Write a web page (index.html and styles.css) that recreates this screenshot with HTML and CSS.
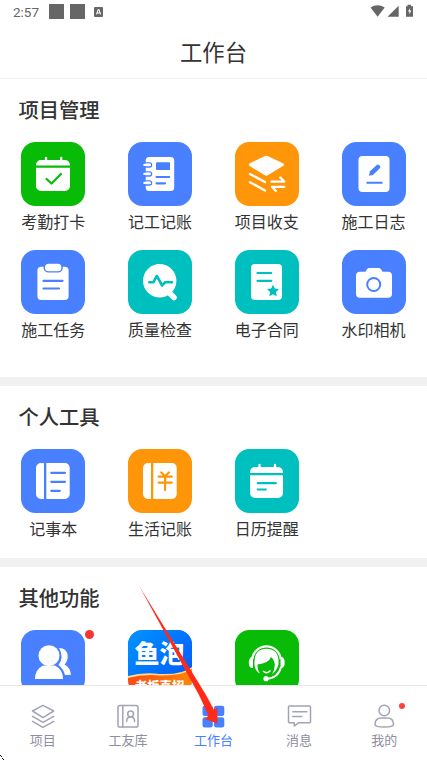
FILE: index.html
```html
<!DOCTYPE html>
<html lang="zh-CN">
<head>
<meta charset="utf-8">
<title>工作台</title>
<link rel="stylesheet" href="styles.css">
</head>
<body>
<div class="screen">
  <div class="status">
    <span class="time">2:57</span>
    <i class="block"></i><i class="block"></i>
    <svg class="abox" viewBox="0 0 9 10"><rect width="9" height="10" rx="1"/><path d="M2.5 7.4 4.1 2.8h.9l1.6 4.6M3.2 6h2.6" fill="none" stroke="#fff" stroke-width="1.1"/></svg>
    <svg class="sys" viewBox="0 0 44 14"><path d="M.5 3.500Q7.500-1 14.700 3.500L7.600 12.700Z"/><path d="M17.500 12.700 28.700 1.700V12.700Z"/><path d="M36 2.200h1.500V.800h3.500v1.400h2v10.500h-7z"/><path d="m40.200 4-2.300 3.600h1.500v3l1.900-4h-1.500z" fill="#fff"/></svg>
  </div>
  <header class="header">工作台</header>
  <main class="content">
    <section class="section projects">
      <h2>项目管理</h2>
      <div class="grid">
        <div class="item"><svg class="tile green" viewBox="0 0 64 64"><path class="w" d="M15 23.500v-.5a5 5 0 0 1 5-5h24a5 5 0 0 1 5 5v.5zM15 25.800h34V44a5 5 0 0 1-5 5H20a5 5 0 0 1-5-5z"/><path class="ws" d="M25 16v4M40.200 16v4"/><path class="l" d="m25.500 37 5 4.500 9.500-9.500"/></svg><span>考勤打卡</span></div>
        <div class="item"><svg class="tile blue" viewBox="0 0 64 64"><rect class="w" x="17.700" y="15" width="28.500" height="34" rx="3.500"/><path class="l" d="M28.500 35h12.700M28.500 41.300h8.500"/><rect class="c" x="28" y="20.300" width="14" height="7.700" rx=".7"/><g class="rings"><path d="M16 20.800h5.500a1.900 1.900 0 0 1 0 4.200H16M16 29.800h5.500a1.900 1.900 0 0 1 0 4.200H16M16 38.800h5.500a1.900 1.900 0 0 1 0 4.200H16"/></g><path class="ws thin" d="M16.300 22.900h5M16.300 31.900h5M16.300 40.900h5"/></svg><span>记工记账</span></div>
        <div class="item"><svg class="tile orange" viewBox="0 0 64 64"><path class="w" d="M29.500 14.200q1.800-.9 3.600 0L48 21.300q2 1.400 0 2.800l-14.900 9q-1.800 1.200-3.600 0l-14.700-9q-2-1.400 0-2.800z"/><path class="ws" d="m15 32 15 8M15 40.200l15 8.300M36.500 39.700h12.800l-4-4.200M49.300 44.800H37l3.700 4"/></svg><span>项目收支</span></div>
        <div class="item"><svg class="tile blue" viewBox="0 0 64 64"><rect class="w" x="16.500" y="14" width="31" height="36" rx="4"/><path class="c" d="m27 33.800 1-4.500 7-6.500q.8-.7 1.600 0l1.500 1.500q.7.8 0 1.600L31 33z"/><path class="c" d="M24.500 39.700h16v2h-16z"/></svg><span>施工日志</span></div>
        <div class="item"><svg class="tile blue" viewBox="0 0 64 64"><rect class="w" x="16.400" y="16.700" width="31.200" height="33.300" rx="4"/><rect x="23.300" y="13" width="17.800" height="8.900" rx="4.200" fill="#fff" stroke="#4880ff" stroke-width="1.400"/><path class="l" d="M22.500 30.800h19M22.500 38.500H38"/></svg><span>施工任务</span></div>
        <div class="item"><svg class="tile teal" viewBox="0 0 64 64"><circle class="w" cx="31.700" cy="30.800" r="16.700"/><path d="m41 42.500 5 5" stroke="#fff" stroke-width="5.500" stroke-linecap="round"/><path class="l bold" d="M21.300 32.300h4L28.800 26l5.400 9.500 2.700-3.200H44"/></svg><span>质量检查</span></div>
        <div class="item"><svg class="tile teal" viewBox="0 0 64 64"><rect class="w" x="16" y="14" width="31" height="36" rx="4"/><path class="l" d="M22.500 23h13.700M22.500 30.800h13.700"/><path class="c" d="m38 34.800 1.900 3.700 4.100.6-3 2.900.7 4.300-3.700-2-3.700 2 .7-4.300-3-2.900 4.100-.6z"/></svg><span>电子合同</span></div>
        <div class="item"><svg class="tile blue" viewBox="0 0 64 64"><path class="w" d="M18 21.700h5.500q1.800-3.700 3.500-3.700h10q1.700 0 3.500 3.700H46a4 4 0 0 1 4 4v18a4 4 0 0 1-4 4H18a4 4 0 0 1-4-4v-18a4 4 0 0 1 4-4z"/><circle cx="31.700" cy="34.500" r="6.500" fill="none" stroke="#4880ff" stroke-width="2"/></svg><span>水印相机</span></div>
      </div>
    </section>
    <section class="section personal">
      <h2>个人工具</h2>
      <div class="grid">
        <div class="item"><svg class="tile blue" viewBox="0 0 64 64"><path class="w" d="M20 14h3v36h-3a5 5 0 0 1-5-5V19a5 5 0 0 1 5-5zM25.300 14H44a4.700 4.700 0 0 1 4.700 4.700v26.600A4.700 4.700 0 0 1 44 50H25.300z"/><path class="l" d="M30.300 23.800h13.700M30.300 32.800h13.700M30.300 41.800h8.500"/></svg><span>记事本</span></div>
        <div class="item"><svg class="tile orange" viewBox="0 0 64 64"><path class="w" d="M20 14h3v36h-3a5 5 0 0 1-5-5V19a5 5 0 0 1 5-5zM25.300 14H44a4.700 4.700 0 0 1 4.700 4.700v26.600A4.700 4.700 0 0 1 44 50H25.300z"/><path class="l" d="m33.300 23.500 3.800 3.800 3.800-3.800M30.700 27.700h13M30.700 33.700h13M37.100 28v13"/></svg><span>生活记账</span></div>
        <div class="item"><svg class="tile teal" viewBox="0 0 64 64"><path class="w" d="M15 24v-1a5 5 0 0 1 5-5h23a5 5 0 0 1 5 5v1zM15 26.300h33V44a5 5 0 0 1-5 5H20a5 5 0 0 1-5-5z"/><path class="ws" d="M24.500 16v4M40 16v4"/><path class="l" d="M22.800 34.200h18M22.800 40.500h8"/></svg><span>日历提醒</span></div>
      </div>
    </section>
    <section class="section others">
      <h2>其他功能</h2>
      <div class="grid">
        <div class="item"><i class="dot"></i><svg class="tile blue" viewBox="0 0 64 64"><circle class="w" cx="28" cy="25.700" r="10.500"/><path class="w" d="M14 49q0-9.500 8-13.500h12q8 4 8 13.500z"/><path class="w" d="M38 18q8 0 8.700 8 .3 5-3.200 8.500 6 3 6.300 10.500H44q-1.500-6-6.500-10 6-8 .5-17z"/></svg></div>
        <div class="item"><svg class="tile" viewBox="0 0 64 64"><defs><linearGradient id="sky" x2="1" y2="1"><stop stop-color="#0095ff"/><stop offset="1" stop-color="#0450fb"/></linearGradient><linearGradient id="sun"><stop stop-color="#ff4b13"/><stop offset="1" stop-color="#ff8505"/></linearGradient></defs><rect width="64" height="64" fill="url(#sky)"/><path d="M0 46q15-4 32-2 22 1 32-7v27H0z" fill="#ffdb84"/><path d="M0 48q15-4 32-2.500 22 .5 32-6.500v25H0z" fill="url(#sun)"/><text class="fish" x="6.500" y="33">鱼泡</text><text class="boss" x="7" y="60.500">老板真招</text></svg></div>
        <div class="item"><svg class="tile green" viewBox="0 0 64 64"><path d="M17.300 29a14.300 14.300 0 0 1 28.400 0" fill="none" stroke="#fff" stroke-width="2.300"/><path class="w" d="M18 27v11h-1.500q-2.700-1-2.700-5.500t2.700-5.500zM45.500 27v11H47q2.700-1 2.700-5.500T47 27z"/><path class="w" d="M19.500 35Q18.300 19 31.500 18.800 44.500 19 43.500 34q-1.500 7-6.500 10.200 6-10.700-1-17.200-2 6-13.500 7.500-.3 5 2.500 9.300-5-3-5.500-8.800z"/><path d="M28 41q4 3.500 7.500-.5" fill="none" stroke="#fff" stroke-width="1.500"/><path d="M46 37q-2.500 11-15 12" fill="none" stroke="#fff" stroke-width="1.900"/><circle class="w" cx="31" cy="48.700" r="2.600"/></svg></div>
      </div>
    </section>
  </main>
  <nav class="tabs">
    <div class="tab"><svg viewBox="0 0 28 28"><path d="M14 3.300 24.700 9 14 15.700 3.500 9zM3.500 14.300 14 20.300l10.700-6M3.500 19.300 14 25.300l10.700-6"/></svg><span>项目</span></div>
    <div class="tab"><svg viewBox="0 0 28 28"><rect x="4" y="3.500" width="20" height="21.500" rx="1.800"/><path d="M8.800 3.500V25M12.600 19.500q0-4.500 4-4.500t4 4.500"/><circle cx="16.600" cy="12" r="2.900"/></svg><span>工友库</span></div>
    <div class="tab active"><svg viewBox="0 0 28 28"><rect x="3.500" y="3.700" width="10.300" height="10.300" rx="2.300"/><rect x="15" y="3.700" width="10.300" height="10.300" rx="2.300"/><rect x="3.500" y="15.200" width="10.300" height="10.300" rx="2.300"/><rect x="15" y="15.200" width="10.300" height="10.300" rx="2.300"/></svg><span>工作台</span></div>
    <div class="tab"><svg viewBox="0 0 28 28"><path d="M4.500 4h20q1 0 1 1v14.800q0 1-1 1h-11L9.300 24v-3.200H4.500q-1 0-1-1V5q0-1 1-1zM7.800 9.700h14M7.800 14.500h9"/></svg><span>消息</span></div>
    <div class="tab"><i class="dot small"></i><svg viewBox="0 0 28 28"><circle cx="14.300" cy="8.500" r="5.300"/><path d="M5 22.500q0-6.500 6.500-6.500h5.700q6.300 0 6.300 6.500 0 2.500-9.300 2.500T5 22.500z"/></svg><span>我的</span></div>
  </nav>
  <svg class="pointer" viewBox="0 0 80 140"><path d="M.3.300 67 109 74.800 123.500 78.300 121.700 78.500 137.500 66 133 69.500 129.500 60 109Z"/></svg>
  <svg class="cursor" viewBox="0 0 5 5"><path d="M0 0h1v1H0zM1 1h1v1H1zM2 3h1v1H2zM3 4h1v1H3z"/></svg>
</div>
</body>
</html>
```
FILE: styles.css
```css
* { box-sizing: border-box; }
body { margin: 0; font-family: "Noto Sans CJK SC", sans-serif; color: #333; background: #fff; }
.screen { position: relative; width: 427px; height: 760px; overflow: hidden; display: flex; flex-direction: column; }
.status { height: 24px; display: flex; align-items: center; padding: 0 13px 0 13px; flex: none; }
.time { font: 13.5px/24px Roboto, sans-serif; color: #666; width: 36px; }
.block { width: 15px; height: 15px; background: #666; margin-right: 6px; margin-top: -1px; }
.abox { width: 9px; height: 10px; fill: #666; margin-left: 3px; margin-top: -1px; }
.sys { width: 44px; height: 14px; fill: #666; margin-left: auto; margin-top: -2px; }
.header { flex: none; height: 55px; border-bottom: 1px solid #f3f3f3; text-align: center; font-size: 22.4px; line-height: 55px; }
.content { flex: 1; min-height: 0; overflow: hidden; }
.section { border-bottom: 9px solid #f1f1f1; padding-top: 13px; }
.section h2 { margin: 0 0 15px 18.5px; font-size: 20.3px; line-height: 35px; font-weight: 500; }
.projects { height: 307px; }
.personal { height: 181px; }
.others { border: 0; }
.grid { display: grid; grid-template-columns: repeat(4, 1fr); row-gap: 12px; }
.item { position: relative; height: 96px; display: flex; flex-direction: column; align-items: center; font-size: 16px; line-height: 30px; }
.tile { flex: none; width: 64px; height: 64px; border-radius: 14.5px; --c: #4880ff; background: var(--c); }
.green { --c: #07bb07; }
.orange { --c: #ff9508; }
.teal { --c: #00bfbf; }
.w { fill: #fff; }
.c { fill: var(--c); }
.ws { fill: none; stroke: #fff; stroke-width: 2.3; stroke-linecap: round; stroke-linejoin: round; }
.thin { stroke-width: 2.2; }
.l { fill: none; stroke: var(--c); stroke-width: 2.2; stroke-linecap: round; stroke-linejoin: round; }
.bold { stroke-width: 2.6; }
.rings { fill: none; stroke: var(--c); stroke-width: 1.3; }
.fish { font-size: 25px; font-weight: 900; fill: #fff; }
.boss { font-size: 12.3px; font-weight: 900; fill: #fff; }
.dot { position: absolute; left: 85px; top: 0; width: 9px; height: 9px; border-radius: 50%; background: #f5352f; }
.dot.small { left: 57px; top: 17px; width: 6px; height: 6px; background: #ff433d; }
.tabs { flex: none; height: 75px; border-top: 1px solid #e8e8e8; background: #fff; display: grid; grid-template-columns: repeat(5, 1fr); }
.tab { position: relative; display: flex; flex-direction: column; align-items: center; padding-top: 16px; font-size: 13px; line-height: 20px; color: #8e8e9e; }
.tab svg { width: 28px; height: 28px; fill: none; stroke: #a3a3b8; stroke-width: 1.5; stroke-linejoin: round; stroke-linecap: round; }
.active { color: #4880ff; }
.tab.active svg { fill: #4880ff; stroke: none; }
.pointer { position: absolute; left: 139px; top: 586px; width: 80px; height: 140px; fill: #ff2a18; }
.cursor { position: absolute; left: 0; top: 755px; width: 5px; height: 5px; fill: #111; }
```
